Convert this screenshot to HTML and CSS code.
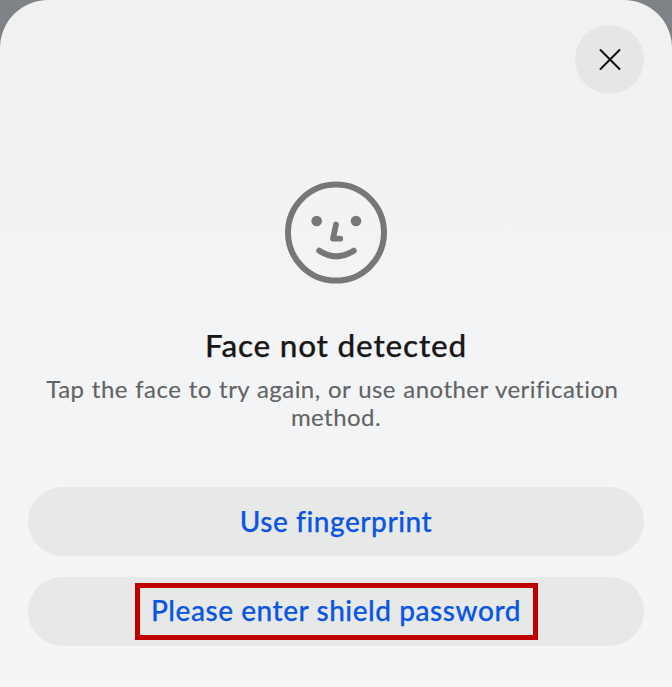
FILE: index.html
```html
<!DOCTYPE html>
<html lang="en">
<head>
<meta charset="utf-8">
<title>Face not detected</title>
<link rel="stylesheet" href="styles.css">
</head>
<body>
<main class="sheet">
  <button class="close" aria-label="Close">
    <svg width="24" height="24" viewBox="0 0 24 24"><path d="M2.5 2 21.5 21M21.5 2 2.5 21" fill="none" stroke="#111" stroke-width="2" stroke-linecap="round"/></svg>
  </button>
  <svg class="face" width="104" height="104" viewBox="0 0 104 104">
    <g fill="none" stroke="#777" stroke-width="6" stroke-linecap="round" stroke-linejoin="round">
      <circle cx="52" cy="52.6" r="48"/>
      <path d="M52 44.5 49 58.7H56.2" stroke-width="5.8"/>
      <path d="M35.3 70.7Q52 82 69.7 70.7"/>
    </g>
    <circle cx="32.7" cy="41" r="5.3" fill="#777"/>
    <circle cx="72" cy="41" r="5.3" fill="#777"/>
  </svg>
  <h1 class="title">Face not detected</h1>
  <p class="hint">Tap the face to try again, or use another verification&nbsp;<br>method.</p>
  <div class="actions">
    <button class="action">Use fingerprint</button>
    <button class="action"><span class="marked">Please enter shield password</span></button>
  </div>
</main>
</body>
</html>
```

FILE: styles.css
```css
* { box-sizing: border-box; }
body { margin: 0; background: #7f8287; font-family: Lato, sans-serif; font-variant-ligatures: none; }
.sheet {
  height: 687px;
  padding: 25px 28px 0;
  display: flex;
  flex-direction: column;
  align-items: center;
  background: linear-gradient(#f1f1f1, #f3f4f5 50%, #f4f5f6);
  border-radius: 48px 48px 0 0;
  overflow: hidden;
}
button { border: 0; padding: 0; font: inherit; }
.close {
  width: 69px;
  height: 69px;
  border-radius: 50%;
  background: #e6e6e6;
  align-self: flex-end;
  display: grid;
  place-items: center;
}
.face { margin-top: 86px; }
.title { margin: 41px 0 0; font-weight: 500; font-size: 31.5px; line-height: 40px; letter-spacing: 0.8px; -webkit-text-stroke: 0.25px; color: #171717; white-space: nowrap; }
.hint { margin: 10px 0 0; text-align: center; font-size: 24px; line-height: 28px; letter-spacing: 0.45px; word-spacing: 0.8px; -webkit-text-stroke: 0.15px; color: #626364; white-space: nowrap; }
.actions { align-self: stretch; margin-top: 56px; display: grid; gap: 21px; }
.action {
  height: 69px;
  padding-bottom: 2px;
  border-radius: 35px;
  background: #e7e8e8;
  color: #0a55e2;
  display: flex;
  align-items: center;
  justify-content: center;
  font-weight: 500;
  font-size: 28px;
  line-height: 36px;
  letter-spacing: 0.55px;
  -webkit-text-stroke: 0.25px;
  white-space: nowrap;
}
.action:has(.marked) { padding: 0; }
.marked { width: 403px; height: 57px; padding-bottom: 3px; border: 5px solid #c00000; display: grid; place-items: center; }
```
